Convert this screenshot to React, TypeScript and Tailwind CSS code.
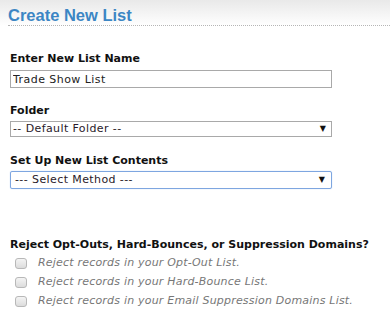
import { useState } from 'react'

const REJECTS = [
  'Reject records in your Opt-Out List.',
  'Reject records in your Hard-Bounce List.',
  'Reject records in your Email Suppression Domains List.',
]

export default function App() {
  const [name, setName] = useState('Trade Show List')
  const [checked, setChecked] = useState<boolean[]>([false, false, false])

  return (
    <div className="w-[390px] h-[334px] bg-white overflow-hidden font-['DejaVu_Sans',Verdana,sans-serif] text-[11px] text-[#111]">
      {/* header */}
      <div className="bg-gradient-to-b from-[#e9e9e9] to-white pt-[6px] pl-2">
        <h1 className="font-['Liberation_Sans',Arial,sans-serif] font-bold text-[16.5px] leading-[18px] text-[#3c86c4] pb-[1px] border-b border-dotted border-[#b5b5b5]">
          Create New List
        </h1>
      </div>

      <div className="pl-[10px] pt-[26px]">
        <label className="block font-bold leading-[14px]">Enter New List Name</label>
        <input
          value={name}
          onChange={e => setName(e.target.value)}
          className="mt-[4px] block w-[322px] h-[18px] border border-[#a9a9a9] px-[2px] text-[11px] tracking-[0.45px] text-[#222] outline-none"
        />

        <label className="block font-bold leading-[14px] mt-[16px]">Folder</label>
        <div className="mt-[3px] w-[322px] h-[16px] border border-[#a9a9a9] flex items-center justify-between px-[2px]">
          <span className="text-[#2a1a2a] tracking-[0.4px]">-- Default Folder --</span>
          <span className="text-[8px] mr-[3px]">▼</span>
        </div>

        <label className="block font-bold leading-[14px] mt-[17px]">Set Up New List Contents</label>
        <div className="mt-[3px] w-[322px] h-[18px] border border-[#7ea6e0] rounded-[2px] flex items-center justify-between px-[4px] shadow-[0_0_1px_#9cc0f0]">
          <span className="text-[#2a1a2a] tracking-[0.4px]">--- Select Method ---</span>
          <span className="text-[8px] mr-[2px]">▼</span>
        </div>

        <label className="block font-bold leading-[14px] mt-[49px]">
          Reject Opt-Outs, Hard-Bounces, or Suppression Domains?
        </label>
        <div className="mt-[5px] flex flex-col gap-[7px]">
          {REJECTS.map((t, i) => (
            <label key={t} className="flex items-center gap-[11px] pl-[5px] h-[12px]">
              <input
                type="checkbox"
                checked={checked[i]}
                onChange={() => setChecked(c => c.map((v, j) => (j === i ? !v : v)))}
                className="appearance-none w-[12px] h-[11px] rounded-[3px] border border-[#b8b8b8] bg-gradient-to-b from-[#f4f4f4] to-[#dcdcdc] m-0"
              />
              <span className="italic text-[#777] tracking-[0.2px]">{t}</span>
            </label>
          ))}
        </div>
      </div>
    </div>
  )
}
